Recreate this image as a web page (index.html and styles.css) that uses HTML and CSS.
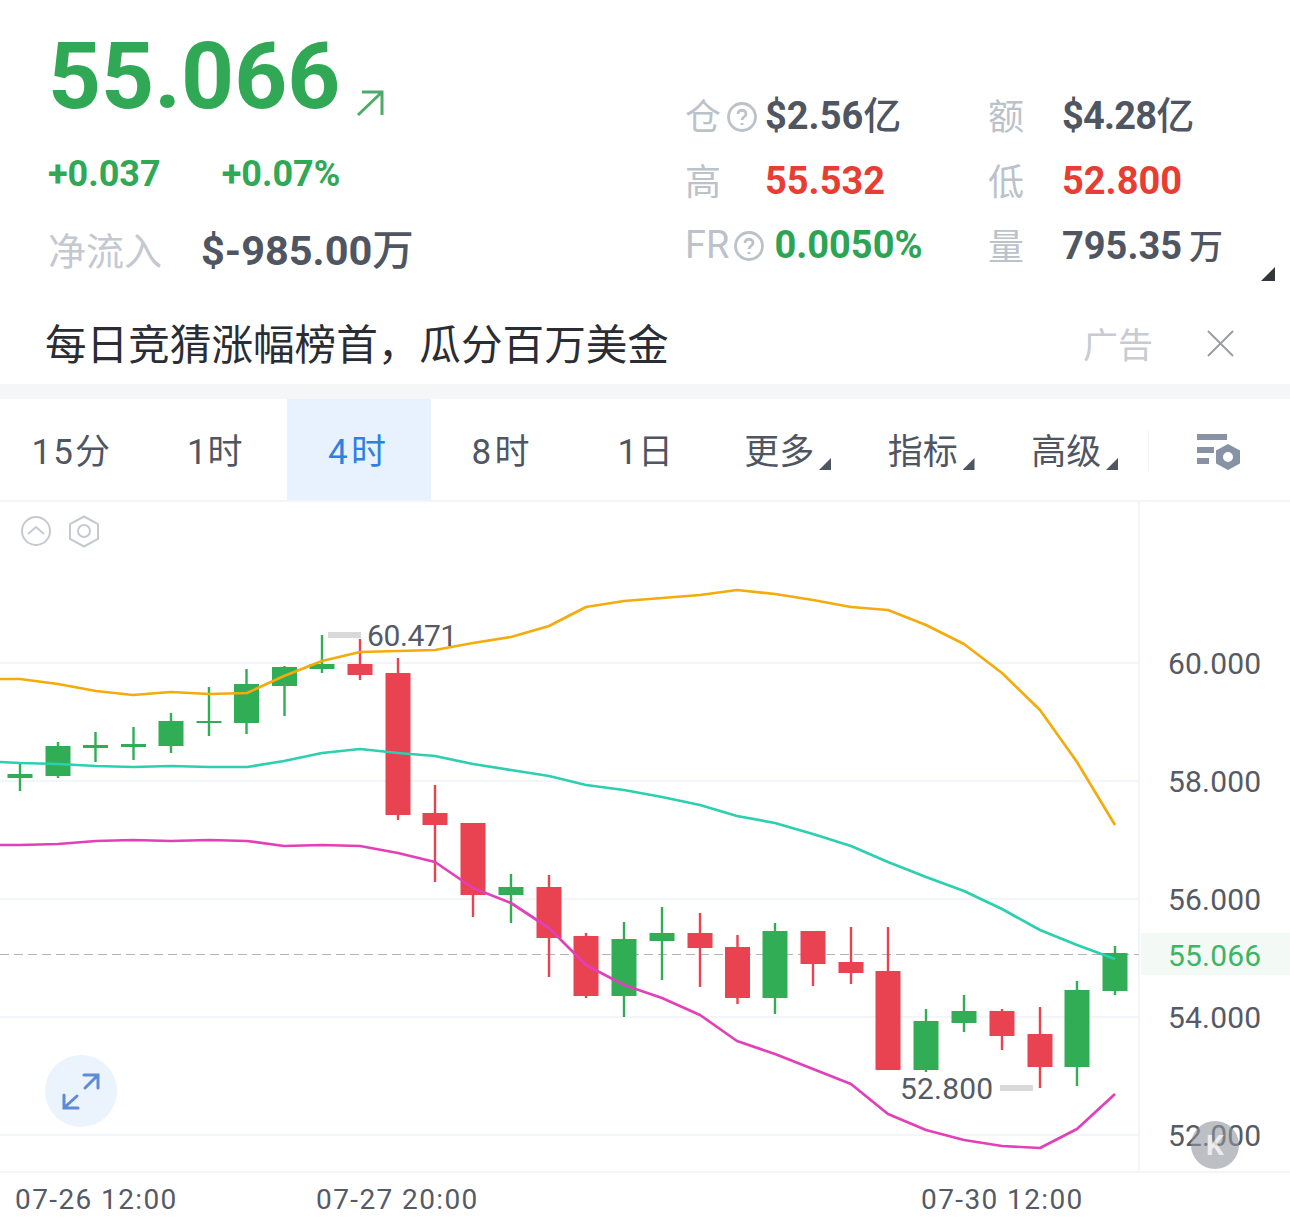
FILE: index.html
```html
<!DOCTYPE html>
<html lang="zh-CN">
<head>
<meta charset="utf-8">
<title>55.066</title>
<link rel="stylesheet" href="styles.css">
</head>
<body>
<header class="quote">
  <div class="quote-left">
    <div class="price-row">
      <span class="price">55.066</span>
      <svg class="price-arrow" viewBox="0 0 28 28"><path d="M2 26 26 3M6 3h20v23"/></svg>
    </div>
    <div class="delta-row"><span class="delta">+0.037</span><span class="delta">+0.07%</span></div>
    <div class="net-row"><span class="net-label">净流入</span><span class="net-value">$-985.00<span class="cjk">万</span></span></div>
  </div>
  <div class="stats">
    <div class="stat-label">仓<svg class="help" viewBox="0 0 30 30"><circle cx="15" cy="15" r="13.5"/><path d="M11 12c0-5 8-5 8 0 0 3-4 3-4 6M15 21v2"/></svg></div>
    <div class="stat-value">$2.56<span class="cjk">亿</span></div>
    <div class="stat-label">额</div>
    <div class="stat-value tight">$4.28<span class="cjk">亿</span></div>
    <div class="stat-label">高</div>
    <div class="stat-value red">55.532</div>
    <div class="stat-label">低</div>
    <div class="stat-value red">52.800</div>
    <div class="stat-label fr">FR<svg class="help" viewBox="0 0 30 30"><circle cx="15" cy="15" r="13.5"/><path d="M11 12c0-5 8-5 8 0 0 3-4 3-4 6M15 21v2"/></svg><span class="stat-value green">0.0050%</span></div>
    <div class="stat-label">量</div>
    <div class="stat-value">795.35<span class="cjk gap">万</span></div>
  </div>
  <i class="corner"></i>
</header>
<section class="ad">
  <span class="ad-text">每日竞猜涨幅榜首，瓜分百万美金</span>
  <span class="ad-tag">广告</span>
  <svg class="ad-close" viewBox="0 0 28 28"><path d="M1 1 27 27M27 1 1 27"/></svg>
</section>
<nav class="tabs">
  <a class="tab mid">15分</a>
  <a class="tab">1时</a>
  <a class="tab active wide">4时</a>
  <a class="tab wide">8时</a>
  <a class="tab">1日</a>
  <a class="tab more">更多</a>
  <a class="tab more">指标</a>
  <a class="tab more">高级</a>
  <span class="tab-tool">
    <svg class="tool-icon" viewBox="0 0 43 38"><path class="tool-bars" d="M0 0h30v6H0zM0 13h17v6H0zM0 24h12v6H0z"/><path class="tool-hex" fill-rule="evenodd" d="M31 10l12 6.500v13L31 36l-12-6.500v-13zM31 18a5 5 0 1 0 0 10 5 5 0 0 0 0-10z"/></svg>
  </span>
</nav>
<section class="chart">
  <svg class="chart-svg" viewBox="0 502 1290 716">
    <g class="grid">
      <path d="M0 663H1139M0 781H1139M0 899H1139M0 1017H1139M0 1135H1139M1139 502V1172M0 1172H1290"/>
    </g>
    <rect class="last-bg" x="1141" y="933" width="149" height="42"/>
    <path class="last-line" d="M0 954.500H1139"/>
    <circle class="ctl" cx="36" cy="531" r="14"/>
    <path class="ctl" d="M28 534l8-7 8 7"/>
    <path class="ctl" d="M84 516.500l14 7.500v15l-14 7.500-14-7.500v-15z"/>
    <circle class="ctl" cx="84" cy="531" r="6"/>
    <g class="up">
      <path d="M7.500 774h25v4h-25zM18.800 764h2.400v27h-2.400z"/>
      <path d="M45.500 746h25v30h-25zM56.800 742h2.400v36h-2.400z"/>
      <path d="M83 745h25v3H83zM94.300 732h2.400v30h-2.400z"/>
      <path d="M121 744h25v3h-25zM132.300 727h2.400v33h-2.400z"/>
      <path d="M158.500 721h25v25h-25zM169.800 713h2.400v40h-2.400z"/>
      <path d="M196.500 721h25v2h-25zM207.800 687h2.400v49h-2.400z"/>
      <path d="M234 684h25v39h-25zM245.300 669h2.400v65h-2.400z"/>
      <path d="M272 667h25v19h-25zM283.300 666h2.400v50h-2.400z"/>
      <path d="M309.500 664h25v5h-25zM320.800 635h2.400v38h-2.400z"/>
      <path d="M498.500 887h25v8h-25zM509.800 874h2.400v49h-2.400z"/>
      <path d="M611.500 939h25v57h-25zM622.800 922h2.400v95h-2.400z"/>
      <path d="M649.500 933h25v8h-25zM660.800 907h2.400v73h-2.400z"/>
      <path d="M762.500 931h25v67h-25zM773.800 923h2.400v91h-2.400z"/>
      <path d="M913.500 1021h25v49h-25zM924.800 1009h2.400v63h-2.400z"/>
      <path d="M951.500 1011h25v12h-25zM962.800 995h2.400v37h-2.400z"/>
      <path d="M1064.500 990h25v77h-25zM1075.800 981h2.400v105h-2.400z"/>
      <path d="M1102.500 953h25v38h-25zM1113.800 946h2.400v49h-2.400z"/>
    </g>
    <g class="down">
      <path d="M347.500 664h25v11h-25zM358.800 639h2.400v41h-2.400z"/>
      <path d="M385.500 673h25v142h-25zM396.800 658h2.400v162h-2.400z"/>
      <path d="M422.500 813h25v12h-25zM433.800 785h2.400v97h-2.400z"/>
      <path d="M460.500 823h25v72h-25zM471.800 823h2.400v94h-2.400z"/>
      <path d="M536.500 887h25v51h-25zM547.800 875h2.400v102h-2.400z"/>
      <path d="M573.500 936h25v60h-25zM584.800 933h2.400v65h-2.400z"/>
      <path d="M687.500 933h25v15h-25zM698.800 913h2.400v74h-2.400z"/>
      <path d="M725 947h25v51h-25zM736.300 935h2.400v69h-2.400z"/>
      <path d="M800.500 931h25v33h-25zM811.800 931h2.400v55h-2.400z"/>
      <path d="M838.500 962h25v11h-25zM849.800 927h2.400v57h-2.400z"/>
      <path d="M875.500 971h25v99h-25zM886.800 927h2.400v143h-2.400z"/>
      <path d="M989.500 1011h25v25h-25zM1000.800 1009h2.400v41h-2.400z"/>
      <path d="M1027.500 1034h25v33h-25zM1038.800 1007h2.400v81h-2.400z"/>
    </g>
    <polyline class="band-top" points="0,679 20,679 58,684 96,691 133,695 171,692 209,694 247,693 284,676 322,661 360,652 398,651 435,650 473,643 511,637 549,626 586,607 624,601 662,598 700,595 737,590 775,594 813,600 851,607 888,610 926,625 964,644 1002,673 1040,710 1077,762 1115,825"/>
    <polyline class="band-mid" points="0,762 20,763 58,764 96,766 133,767 171,766 209,767 247,767 284,761 322,753 360,749 398,753 435,756 473,764 511,770 549,776 586,785 624,790 662,797 700,805 737,816 775,823 813,834 851,846 888,862 926,877 964,891 1002,909 1040,930 1077,945 1115,959"/>
    <polyline class="band-low" points="0,845 20,845 58,844 96,841 133,840 171,841 209,840 247,841 284,846 322,845 360,846 398,853 435,862 473,888 511,903 549,928 586,965 624,985 662,998 700,1015 737,1041 775,1054 813,1069 851,1084 888,1114 926,1130 964,1140 1002,1146 1040,1148 1077,1129 1115,1094"/>
    <rect class="mark" x="328" y="632" width="33" height="6"/>
    <rect class="mark" x="1000" y="1085" width="33" height="6"/>
    <text class="axis peak" x="367" y="646">60.471</text>
    <text class="axis" x="900" y="1099">52.800</text>
    <text class="axis" x="1168" y="674">60.000</text>
    <text class="axis" x="1168" y="792">58.000</text>
    <text class="axis" x="1168" y="910">56.000</text>
    <text class="axis last" x="1168" y="966">55.066</text>
    <text class="axis" x="1168" y="1028">54.000</text>
    <text class="axis" x="1168" y="1146">52.000</text>
    <text class="axis date" x="15" y="1209">07-26 12:00</text>
    <text class="axis date" x="316" y="1209">07-27 20:00</text>
    <text class="axis date" x="921" y="1209">07-30 12:00</text>
    <circle class="expand-bg" cx="81" cy="1091" r="36"/>
    <path class="expand" d="M85 1088 97 1076M84 1075h14v13M77 1096 65 1107M64 1095v13h14"/>
    <circle class="kbtn" cx="1215" cy="1145" r="24"/>
    <text class="ktext" x="1215" y="1155">K</text>
  </svg>
</section>
</body>
</html>
```

FILE: styles.css
```css
* { box-sizing: border-box; }
html, body { margin: 0; padding: 0; }
body {
  width: 1290px;
  height: 1218px;
  overflow: hidden;
  background: #fff;
  font-family: Roboto, "Noto Sans CJK SC", sans-serif;
  color: #4f5662;
}
.cjk { font-family: "Noto Sans CJK SC", sans-serif; font-weight: 500; line-height: 0; }
.gap { margin-left: 7px; font-size: 34px; }

.quote { position: relative; height: 300px; display: flex; }
.quote-left { width: 685px; padding: 27px 0 0 48px; }
.price-row { display: flex; height: 100px; }
.price { font-size: 92.600px; line-height: 100px; font-weight: 700; color: #30a855; }
.price-arrow { width: 28px; height: 28px; align-self: flex-end; margin: 0 0 10px 16px; fill: none; stroke: #4cab68; stroke-width: 3; }
.delta-row { display: flex; gap: 61px; margin-top: 22px; height: 50px; align-items: center; }
.delta { font-size: 36px; font-weight: 700; color: #30a855; }
.net-row { display: flex; gap: 39px; margin-top: 24px; height: 50px; align-items: center; }
.net-label { font-size: 38px; color: #c4c9d1; font-family: "Noto Sans CJK SC", sans-serif; }
.net-value { font-size: 41.500px; font-weight: 700; color: #4f5662; margin-top: 4px; }

.stats {
  display: grid;
  grid-template-columns: 80px 223px 74px 220px;
  grid-auto-rows: 65px;
  padding-top: 83px;
  align-items: center;
}
.stat-label { display: flex; align-items: center; height: 50px; font-size: 36px; line-height: 46px; color: #bcc2ca; font-family: "Noto Sans CJK SC", sans-serif; white-space: nowrap; padding-bottom: 4px; }
.stat-value { font-size: 38px; line-height: 50px; font-weight: 700; color: #4f5662; font-family: Roboto, sans-serif; white-space: nowrap; }
.tight { letter-spacing: -0.800px; }
.stats .red { color: #e83d32; }
.stats .green { color: #2ba553; margin-left: 10px; }
.help { width: 30px; height: 30px; margin: 6px 0 0 6px; flex: none; fill: none; stroke: #bcc2ca; stroke-width: 2.800; }
.fr { grid-column: span 2; font-family: Roboto, sans-serif; font-size: 38px; padding-bottom: 1px; line-height: 49px; }
.fr .help { margin: 2px 0 0 5px; }
.corner { position: absolute; left: 1261px; top: 267px; width: 14px; height: 14px; background: #33363b; clip-path: polygon(100% 0, 100% 100%, 0 100%); }

.ad { height: 84px; display: flex; align-items: center; padding: 0 56px 0 45px; }
.ad-text { flex: 1; font-size: 41.600px; color: #2a2d33; font-family: "Noto Sans CJK SC", sans-serif; }
.ad-tag { font-size: 35px; color: #c8ccd2; font-family: "Noto Sans CJK SC", sans-serif; margin-right: 54px; }
.ad-close { width: 27px; height: 27px; margin-top: 3px; fill: none; stroke: #9a9ea6; stroke-width: 2; }

.tabs { display: flex; height: 118px; border-top: 15px solid #f5f6f8; border-bottom: 2px solid #f2f4f7; }
.tab { position: relative; width: 143.500px; display: flex; align-items: center; justify-content: center; padding-bottom: 2px; font-size: 35px; letter-spacing: 1px; color: #4f5662; font-family: Roboto, "Noto Sans CJK SC", sans-serif; }
.tab.mid { letter-spacing: 2px; }
.tab.wide { letter-spacing: 3.500px; }
.tab.active { background: #e8f2fe; color: #2f7fe0; }
.tab.more { letter-spacing: 0; padding-right: 20px; }
.tab.more::after { content: ""; position: absolute; right: 30px; top: 59px; width: 12px; height: 12px; background: #4f5662; clip-path: polygon(100% 0, 100% 100%, 0 100%); }
.tab-tool { position: relative; flex: 1; display: flex; align-items: center; padding-left: 49px; }
.tab-tool::before { content: ""; position: absolute; left: 0; top: 31px; width: 1px; height: 40px; background: #f2f4f7; }
.tool-icon { width: 43px; height: 38px; margin-top: 6px; }
.tool-bars, .tool-hex { fill: #8793a5; }

.chart { height: 716px; }
.chart-svg { display: block; width: 1290px; height: 716px; }
.grid path { fill: none; stroke: #f2f5f9; stroke-width: 2; }
.last-bg { fill: #f3f9f5; }
.last-line { stroke: #b4b4b6; stroke-width: 1; stroke-dasharray: 9 5; fill: none; }
.ctl { fill: none; stroke: #c6cad0; stroke-width: 2; }
.up { fill: #31ad56; }
.down { fill: #e94352; }
.band-top, .band-mid, .band-low { fill: none; stroke-width: 2.700; stroke-linejoin: round; }
.band-top { stroke: #f4ab0c; }
.band-mid { stroke: #2ccfb0; }
.band-low { stroke: #e23fb8; }
.mark { fill: #d9d9d9; }
.axis { font-family: Roboto, sans-serif; font-size: 30px; fill: #555a65; letter-spacing: 0.200px; }
.axis.peak { letter-spacing: -0.400px; }
.axis.date { font-size: 28px; letter-spacing: 1.400px; }
.axis.last { fill: #3cb566; }
.expand-bg { fill: #ebf3fd; }
.expand { fill: none; stroke: #5f8bd6; stroke-width: 3; stroke-linecap: round; }
.kbtn { fill: #8f949c; opacity: 0.6; }
.ktext { font-family: Roboto, sans-serif; font-size: 28px; font-weight: 700; fill: #fff; opacity: 0.7; text-anchor: middle; }
```
